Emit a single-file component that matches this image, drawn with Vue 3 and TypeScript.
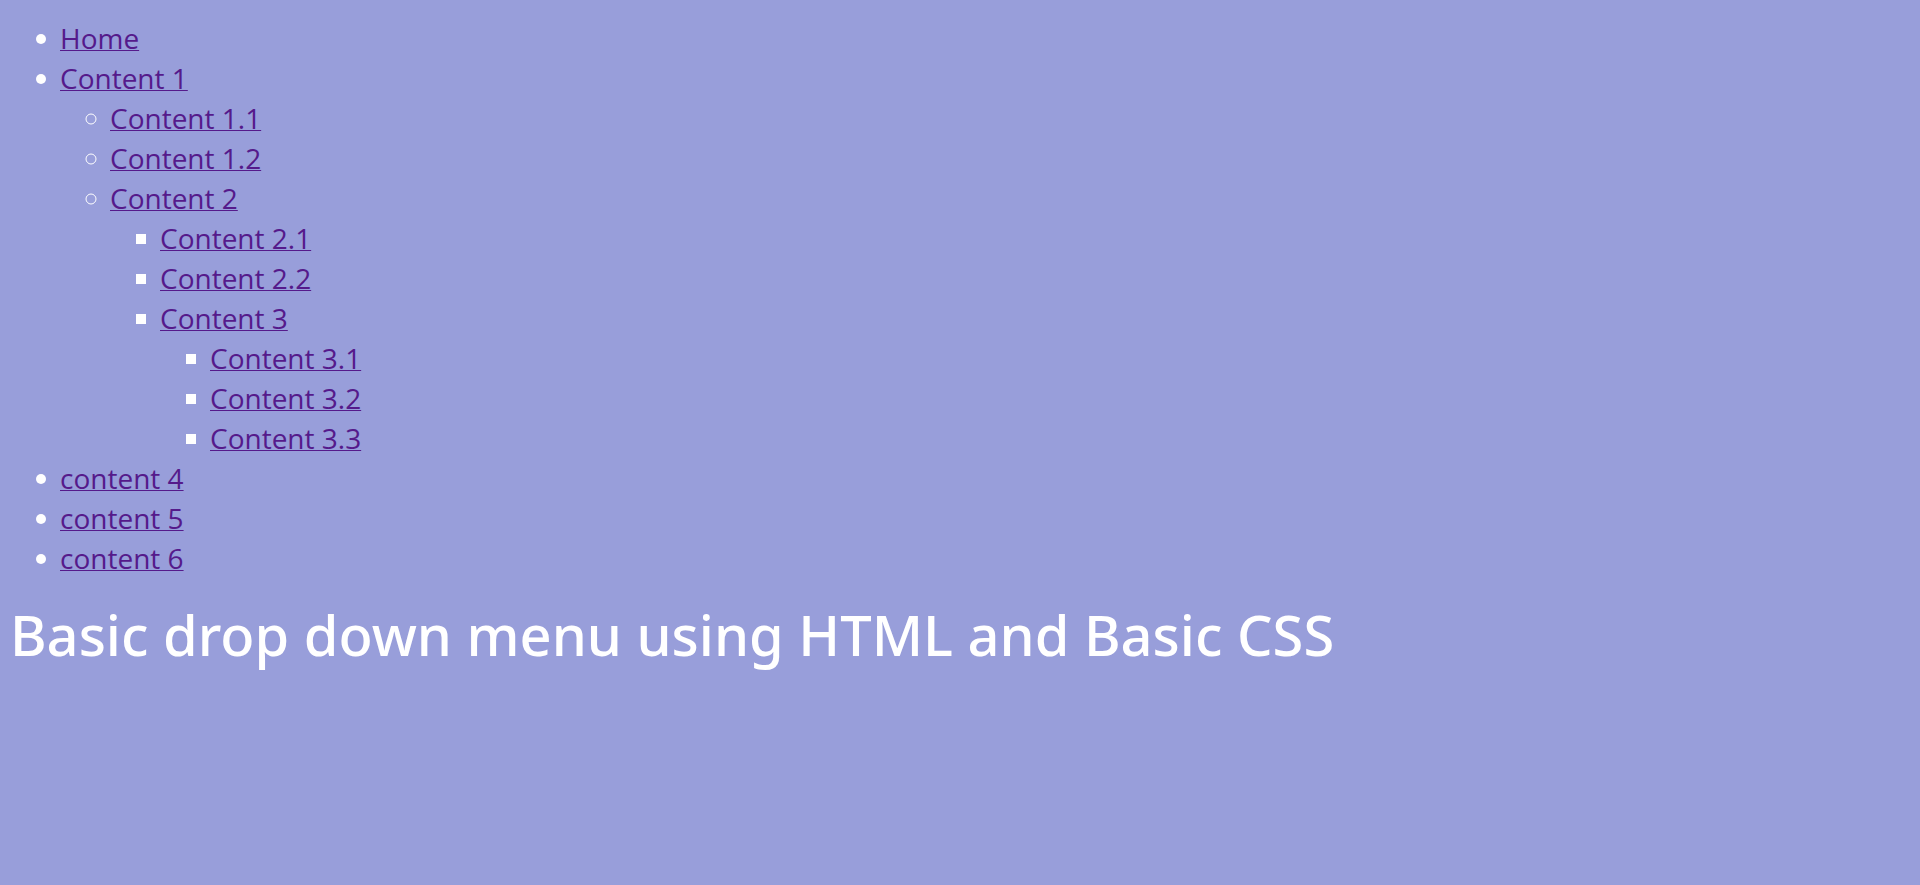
<script setup lang="ts">
</script>

<template>
  <nav class="menu" aria-label="Main">
    <ul>
      <li><a href="#">Home</a></li>
      <li>
        <a href="#">Content 1</a>
        <ul>
          <li><a href="#">Content 1.1</a></li>
          <li><a href="#">Content 1.2</a></li>
          <li>
            <a href="#">Content 2</a>
            <ul>
              <li><a href="#">Content 2.1</a></li>
              <li><a href="#">Content 2.2</a></li>
              <li>
                <a href="#">Content 3</a>
                <ul>
                  <li><a href="#">Content 3.1</a></li>
                  <li><a href="#">Content 3.2</a></li>
                  <li><a href="#">Content 3.3</a></li>
                </ul>
              </li>
            </ul>
          </li>
        </ul>
      </li>
      <li><a href="#">content 4</a></li>
      <li><a href="#">content 5</a></li>
      <li><a href="#">content 6</a></li>
    </ul>
  </nav>
  <h1 class="title">Basic drop down menu using HTML and Basic CSS</h1>
</template>

<style>
body {
  margin: 0;
  background: #989eda;
}
</style>

<style scoped>
.menu {
  padding: 18px 10px 0;
  color: #fff;
  font: 28px/40px "Open Sans", sans-serif;
}

.menu ul {
  margin: 0;
  padding-left: 53px;
}

.menu li ul {
  padding-left: 50px;
}

/* Bring the labels closer to their list markers. */
.menu a {
  margin-left: -3px;
  color: #551a8b;
  text-decoration-thickness: 1px;
}

.title {
  margin: 14px 10px;
  color: #fff;
  font: 500 56px/84px "Noto Sans", sans-serif;
}
</style>
